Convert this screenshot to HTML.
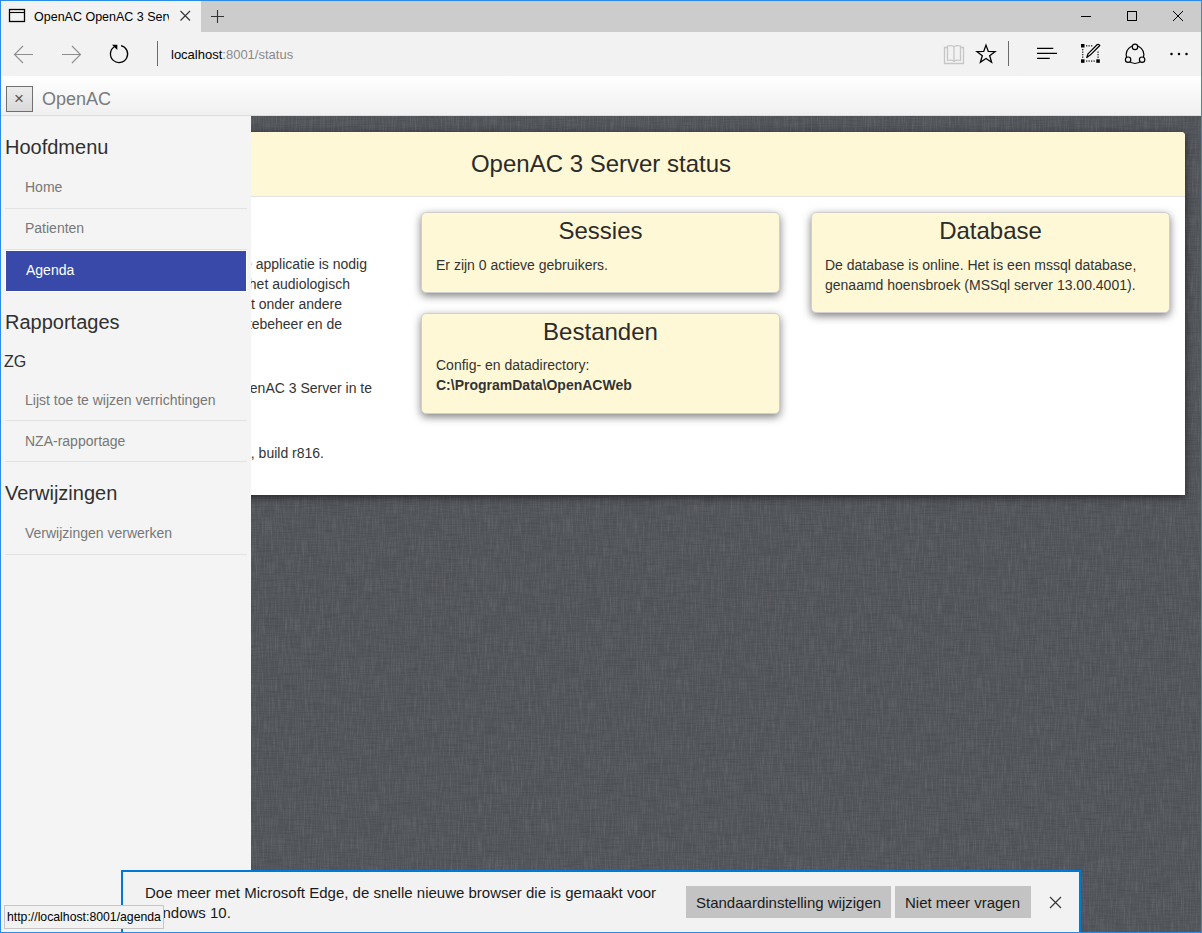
<!DOCTYPE html>
<html><head><meta charset="utf-8">
<style>
*{box-sizing:border-box}
html,body{margin:0;padding:0;width:1202px;height:933px;overflow:hidden;background:#f2f2f2;font-family:"Liberation Sans",sans-serif;position:relative}
div{position:absolute}
#tabbar{left:1px;top:1px;width:1200px;height:31px;background:#cccccc}
#tab{left:1px;top:1px;width:200px;height:31px;background:#f2f2f2}
#toolbar{left:1px;top:32px;width:1200px;height:44px;background:#f2f2f2}
#pghead{left:1px;top:76px;width:1200px;height:40px;background:linear-gradient(#ffffff,#f0f0f0);border-bottom:1px solid #dcdcdc}
#dark{left:1px;top:116px;width:1200px;height:816px;background-color:#53565b}
#panel{left:17px;top:132px;width:1168px;height:363px;background:#fff;border-radius:4px 4px 0 0;box-shadow:0 2px 8px rgba(0,0,0,.6)}
#phead{left:0;top:0;width:1168px;height:65px;background:#fff8d6;border-bottom:1px solid #e3e3e3;border-radius:4px 4px 0 0}
#sidebar{left:1px;top:116px;width:250px;height:816px;background:#f4f4f4}
.card{background:#fff8d6;border:1px solid #cfcfcf;border-radius:5px;box-shadow:0 3px 9px rgba(0,0,0,.5)}
.h3{left:0;width:100%;font-size:24px;line-height:20px;text-align:center;color:#2b2b2b;white-space:nowrap}
.t{white-space:nowrap;font-size:14px;line-height:20px;color:#333}
.sh{font-size:20px;line-height:20px;color:#303030;white-space:nowrap}
.si{font-size:14px;line-height:20px;color:#777;white-space:nowrap}
.sep{height:1px;background:#e2e2e2;left:5px;width:242px}
</style></head>
<body>
<div id="tabbar"></div>
<div id="tab"></div>
<div id="toolbar"></div>
<div id="pghead"></div>
<div id="dark"><svg width="1200" height="816" style="position:absolute;left:0;top:0">
<filter id="lv" x="0" y="0" width="100%" height="100%"><feTurbulence type="fractalNoise" baseFrequency="0.85 0.05" numOctaves="2" seed="7"/><feColorMatrix type="matrix" values="0 0 0 0 1  0 0 0 0 1  0 0 0 0 1  0.2 0 0 0 -0.085"/></filter>
<filter id="lh" x="0" y="0" width="100%" height="100%"><feTurbulence type="fractalNoise" baseFrequency="0.05 0.85" numOctaves="2" seed="11"/><feColorMatrix type="matrix" values="0 0 0 0 0  0 0 0 0 0  0 0 0 0 0  0.2 0 0 0 -0.075"/></filter>
<rect width="1200" height="816" filter="url(#lv)"/>
<rect width="1200" height="816" filter="url(#lh)"/>
</svg></div>
<!--CHROME-->

<div id="panel">
  <div id="phead"></div>
  <div class="h3" style="top:22px">OpenAC 3 Server status</div>
</div>

<!-- left column text (mostly hidden behind sidebar) -->
<div class="t" style="right:835px;top:254px">Deze applicatie is nodig</div>
<div class="t" style="right:852px;top:274px">om het audiologisch</div>
<div class="t" style="right:860px;top:294px">bevat onder andere</div>
<div class="t" style="right:860px;top:314px">patientebeheer en de</div>
<div class="t" style="right:830px;top:378px">Deze OpenAC 3 Server in te</div>
<div class="t" style="right:878px;top:443px">Versie 3.0, build r816.</div>

<div class="card" style="left:421px;top:212px;width:359px;height:81px">
  <div class="h3" style="top:8px">Sessies</div>
  <div class="t" style="left:14px;top:42px">Er zijn 0 actieve gebruikers.</div>
</div>
<div class="card" style="left:421px;top:313px;width:359px;height:101px">
  <div class="h3" style="top:8px">Bestanden</div>
  <div class="t" style="left:14px;top:41px">Config- en datadirectory:</div>
  <div class="t" style="left:14px;top:61px;font-weight:bold">C:\ProgramData\OpenACWeb</div>
</div>
<div class="card" style="left:811px;top:212px;width:359px;height:101px">
  <div class="h3" style="top:8px">Database</div>
  <div class="t" style="left:13px;top:42px">De database is online. Het is een mssql database,</div>
  <div class="t" style="left:13px;top:62px">genaamd hoensbroek (MSSql server 13.00.4001).</div>
</div>

<div id="sidebar"></div>
<div class="sh" style="left:5px;top:137px">Hoofdmenu</div>
<div class="si" style="left:25px;top:177px">Home</div>
<div class="sep" style="top:208px"></div>
<div class="si" style="left:25px;top:218px">Patienten</div>
<div class="sep" style="top:249px"></div>
<div style="left:5px;top:250px;width:242px;height:42px;background:#fff"></div>
<div style="left:6px;top:251px;width:240px;height:40px;background:#3949a9"></div>
<div class="si" style="left:26px;top:260px;color:#fff">Agenda</div>
<div class="sh" style="left:5px;top:312px">Rapportages</div>
<div class="sh" style="left:4px;top:352px;font-size:16px">ZG</div>
<div class="si" style="left:25px;top:390px">Lijst toe te wijzen verrichtingen</div>
<div class="sep" style="top:420px"></div>
<div class="si" style="left:25px;top:431px">NZA-rapportage</div>
<div class="sep" style="top:461px"></div>
<div class="sh" style="left:5px;top:483px">Verwijzingen</div>
<div class="si" style="left:25px;top:523px">Verwijzingen verwerken</div>
<div class="sep" style="top:554px"></div>


<!-- tab bar & toolbar icons -->
<svg style="position:absolute;left:0;top:0" width="1202" height="80">
  <!-- window icon -->
  <rect x="9.5" y="9.5" width="15" height="12" fill="none" stroke="#000" stroke-width="1.3"/>
  <line x1="9.5" y1="12.5" x2="24.5" y2="12.5" stroke="#000" stroke-width="1.1"/>
  <!-- tab close -->
  <path d="M180.5,11 L190,20.5 M190,11 L180.5,20.5" stroke="#333" stroke-width="1.1" fill="none"/>
  <!-- new tab plus -->
  <path d="M217.5,10 V23 M211,16.5 H224" stroke="#333" stroke-width="1.1" fill="none"/>
  <!-- window controls -->
  <path d="M1081,16.5 H1091" stroke="#000" stroke-width="1"/>
  <rect x="1127.5" y="11.5" width="9" height="9" fill="none" stroke="#000" stroke-width="1"/>
  <path d="M1173,11 L1183,21 M1183,11 L1173,21" stroke="#000" stroke-width="1" fill="none"/>
  <!-- back / forward -->
  <path d="M14.5,54.5 H33 M23,46 L14.5,54.5 L23,63" stroke="#8e8e8e" stroke-width="1.1" fill="none"/>
  <path d="M62,54.5 H80.5 M72,46 L80.5,54.5 L72,63" stroke="#8e8e8e" stroke-width="1.1" fill="none"/>
  <!-- refresh -->
  <path d="M121,45.6 A8.6,8.6 0 1 1 114.3,46.8" stroke="#000" stroke-width="1.3" fill="none"/>
  <path d="M112,44.8 L117.3,44.8 L117.3,50 Z" fill="#000"/>
  <!-- separators -->
  <rect x="157" y="41" width="1" height="25" fill="#6b6b6b"/>
  <rect x="1008" y="41" width="1" height="25" fill="#6b6b6b"/>
  <!-- reading view book (disabled) -->
  <g stroke="#c6c6c6" stroke-width="1.3" fill="none">
    <path d="M947.5,47.5 H944.5 V63.5 H963.5 V47.5 H960.5"/>
    <path d="M947.5,60.5 V46 Q951,45 954,46.5 Q957,45 960.5,46 V60.5 Q957,59.5 954,61 Q951,59.5 947.5,60.5 Z"/>
    <path d="M954,46.5 V62"/>
  </g>
  <!-- star -->
  <path d="M986.00,45.10 L988.29,51.45 L995.04,51.66 L989.70,55.80 L991.58,62.29 L986.00,58.50 L980.42,62.29 L982.30,55.80 L976.96,51.66 L983.71,51.45 Z" fill="none" stroke="#000" stroke-width="1.3" stroke-linejoin="miter"/>
  <!-- hub -->
  <path d="M1037,48.4 H1053.3 M1037,53.4 H1057 M1037,58.4 H1049.7" stroke="#000" stroke-width="1.3"/>
  <!-- web note -->
  <g fill="#000">
    <rect x="1081" y="44" width="3.5" height="3.5"/>
    <rect x="1081" y="59.3" width="3.5" height="3.5"/>
    <rect x="1096.3" y="59.3" width="3.5" height="3.5"/>
    <rect x="1086" y="45.3" width="1.3" height="1.1"/><rect x="1088.5" y="45.3" width="1.3" height="1.1"/><rect x="1091" y="45.3" width="1.3" height="1.1"/>
    <rect x="1086" y="60.5" width="1.3" height="1.1"/><rect x="1088.5" y="60.5" width="1.3" height="1.1"/><rect x="1091" y="60.5" width="1.3" height="1.1"/><rect x="1093.5" y="60.5" width="1.3" height="1.1"/>
    <rect x="1082.2" y="49" width="1.1" height="1.3"/><rect x="1082.2" y="51.5" width="1.1" height="1.3"/><rect x="1082.2" y="54" width="1.1" height="1.3"/><rect x="1082.2" y="56.5" width="1.1" height="1.3"/>
    <rect x="1097.5" y="51.5" width="1.1" height="1.3"/><rect x="1097.5" y="54" width="1.1" height="1.3"/><rect x="1097.5" y="56.5" width="1.1" height="1.3"/>
  </g>
  <path d="M1086.8,57.5 L1088,53.8 L1097.3,44.5 Q1099,43.8 1099.8,45.5 L1090.5,54.8 Z" fill="none" stroke="#000" stroke-width="1.2" stroke-linejoin="round"/>
  <!-- share -->
  <g fill="none" stroke="#000" stroke-width="1.2">
    <circle cx="1135" cy="54.6" r="8.9"/>
  </g>
  <g fill="#f2f2f2" stroke="#000" stroke-width="1.2">
    <circle cx="1135" cy="46.9" r="2.7"/>
    <circle cx="1128.1" cy="59.7" r="2.7"/>
    <circle cx="1142.1" cy="59.7" r="2.7"/>
  </g>
  <!-- more -->
  <g fill="#000">
    <circle cx="1171.5" cy="53.9" r="1.25"/>
    <circle cx="1179" cy="53.9" r="1.25"/>
    <circle cx="1186.5" cy="53.9" r="1.25"/>
  </g>
</svg>
<div style="left:34px;top:7px;width:135px;height:22px;overflow:hidden;white-space:nowrap;font-size:12.5px;line-height:20px;color:#000">OpenAC OpenAC 3 Server status</div>
<div style="left:171px;top:45px;white-space:nowrap;font-size:13px;line-height:20px;color:#000">localhost<span style="color:#8a8a8a">:8001/status</span></div>
<!-- page header -->
<div style="left:6px;top:86px;width:27px;height:26px;border:1px solid #707070;background:linear-gradient(#ececec,#d9d9d9)"></div>
<div style="left:14px;top:89px;font-size:17px;line-height:20px;color:#555">&#215;</div>
<div style="left:42px;top:89px;font-size:18px;line-height:20px;color:#7a7a7a;white-space:nowrap">OpenAC</div>


<!-- edge notification -->
<div style="left:121px;top:870px;width:960px;height:80px;border:2px solid #0078d7;background:#f2f2f2"></div>
<div id="n1" style="left:145px;top:883px;font-size:15px;line-height:20px;color:#1a1a1a;white-space:nowrap">Doe meer met Microsoft Edge, de snelle nieuwe browser die is gemaakt voor</div>
<div id="n2" style="left:145px;top:903px;font-size:15px;line-height:20px;color:#1a1a1a;white-space:nowrap">Windows 10.</div>
<div style="left:686px;top:886px;width:205px;height:32px;background:#c3c3c3"></div>
<div id="b1" style="left:696px;top:893px;font-size:15px;line-height:20px;color:#1a1a1a;white-space:nowrap">Standaardinstelling wijzigen</div>
<div style="left:895px;top:886px;width:136px;height:32px;background:#c3c3c3"></div>
<div id="b2" style="left:905px;top:893px;font-size:15px;line-height:20px;color:#1a1a1a;white-space:nowrap">Niet meer vragen</div>
<svg style="position:absolute;left:1040px;top:890px" width="30" height="30"><path d="M10,7 L21,18 M21,7 L10,18" stroke="#333" stroke-width="1.1" fill="none"/></svg>
<!-- status tooltip -->
<div style="left:4px;top:905px;width:160px;height:24px;border:1px solid #c6c6c6;background:#f2f2f2"></div>
<div id="tt" style="left:7px;top:907px;font-size:12.25px;line-height:20px;color:#000;white-space:nowrap">http://localhost:8001/agenda</div>

<!-- window border -->
<div style="left:0;top:0;width:1202px;height:933px;border:1px solid #2a8ce8"></div>
</body></html>
